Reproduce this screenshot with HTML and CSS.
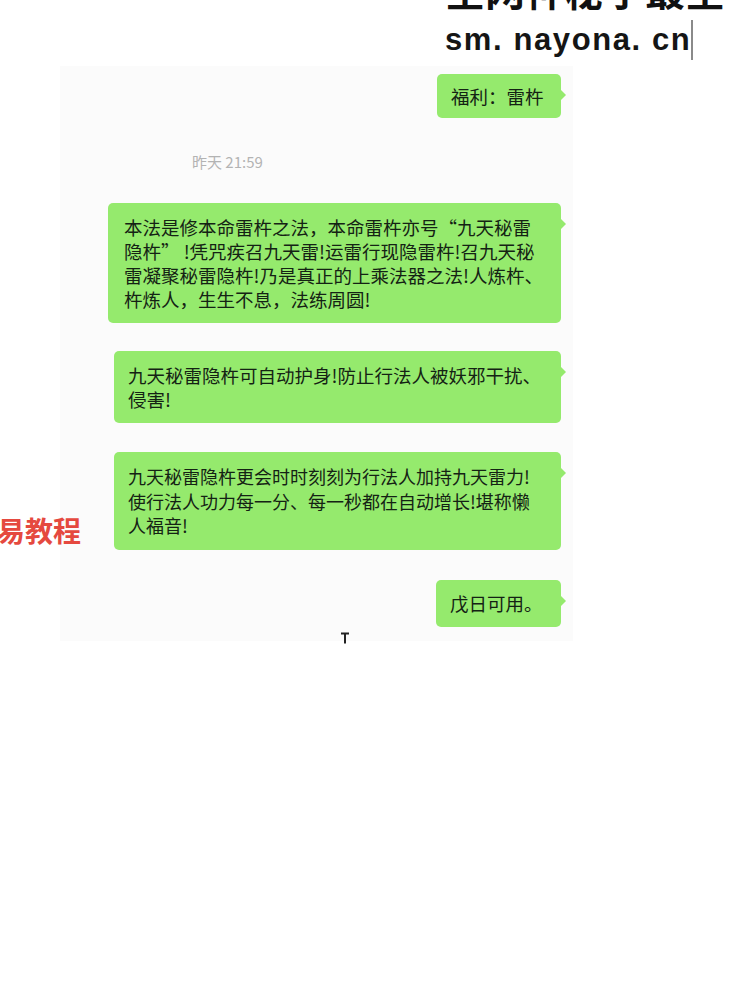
FILE: index.html
```html
<!DOCTYPE html>
<html lang="zh">
<head>
<meta charset="utf-8">
<link rel="stylesheet" href="styles.css">
</head>
<body>
<div class="page">
  <div class="wm">
    <div class="wm1">全网神秘学最全</div>
    <div class="wm2"><span>sm. nayona. cn</span><i class="caret"></i></div>
  </div>
  <div class="panel">
    <div class="row"><div class="bubble b1">福利：雷杵</div></div>
    <div class="time">昨天 21:59</div>
    <div class="row"><div class="bubble b2">本法是修本命雷杵之法，本命雷杵亦号“九天秘雷<br>隐杵” !凭咒疾召九天雷!运雷行现隐雷杵!召九天秘<br>雷凝聚秘雷隐杵!乃是真正的上乘法器之法!人炼杵、<br>杵炼人，生生不息，法练周圆!</div></div>
    <div class="row"><div class="bubble b3">九天秘雷隐杵可自动护身!防止行法人被妖邪干扰、<br>侵害!</div></div>
    <div class="row"><div class="bubble b4">九天秘雷隐杵更会时时刻刻为行法人加持九天雷力!<br>使行法人功力每一分、每一秒都在自动增长!堪称懒<br>人福音!</div></div>
    <div class="row"><div class="bubble b5">戊日可用。</div></div>
    <svg class="ibeam" width="10" height="12" viewBox="0 0 10 12"><path d="M1 1.5h8M5 1.5v10" stroke="#222" stroke-width="2" fill="none"/></svg>
  </div>
  <div class="redmark">易教程</div>
</div>
</body>
</html>
```
FILE: styles.css
```css
html, body {
  margin: 0;
  padding: 0;
  background: #ffffff;
}
body {
  font-family: "Noto Sans CJK SC", "Noto Sans", sans-serif;
  color: #1c1c1c;
}
.page {
  position: relative;
  width: 734px;
  height: 1000px;
  overflow: hidden;
}
.wm {
  height: 66px;
  padding-left: 445px;
  overflow: hidden;
}
.wm1 {
  font-size: 40px;
  font-weight: 700;
  line-height: 40px;
  margin-top: -31px;
  color: #111;
  white-space: nowrap;
}
.wm2 {
  display: flex;
  align-items: center;
  margin-top: 11px;
  font-family: "Liberation Sans", Arial, sans-serif;
  font-weight: 700;
  font-size: 31px;
  letter-spacing: 1.6px;
  line-height: 40px;
  color: #151515;
  white-space: nowrap;
}
.caret {
  display: block;
  width: 2px;
  height: 40px;
  background: #8a8a8a;
  margin-left: 0;
}
.panel {
  position: relative;
  margin-left: 60px;
  width: 513px;
  height: 575px;
  background: #fbfbfb;
  padding-top: 8px;
  box-sizing: border-box;
}
.row {
  display: flex;
  justify-content: flex-end;
  padding-right: 12px;
}
.bubble {
  position: relative;
  background: #95ea6d;
  border-radius: 5px;
  font-size: 18.5px;
  line-height: 24px;
  color: #142214;
  box-sizing: border-box;
  white-space: nowrap;
}
.bubble::after {
  content: "";
  position: absolute;
  right: -5px;
  top: 16px;
  border-top: 5px solid transparent;
  border-bottom: 5px solid transparent;
  border-left: 5px solid #95ea6d;
}
.b1 {
  width: 124px;
  padding: 10px 14px;
}
.b2 {
  width: 453px;
  padding: 12px 14px 12px 16px;
}
.b3 {
  width: 447px;
  padding: 12px 12px 12px 14px;
}
.b4 {
  width: 447px;
  padding: 12px 10px 12px 14px;
  font-size: 18px;
  line-height: 24.5px;
}
.b5 {
  width: 125px;
  padding: 11px 14px 12px;
}
.time {
  padding-left: 132px;
  margin-top: 35px;
  margin-bottom: 32px;
  font-size: 15px;
  line-height: 18px;
  color: #b3b3b3;
}
.b2 { margin-bottom: 28px; }
.b3 { margin-bottom: 29px; }
.b4 { margin-bottom: 30px; }
.ibeam {
  position: absolute;
  left: 280px;
  top: 566px;
}
.redmark {
  position: absolute;
  left: -3px;
  top: 510px;
  font-size: 28px;
  font-weight: 700;
  line-height: 40px;
  color: #e5493f;
  white-space: nowrap;
}
```
